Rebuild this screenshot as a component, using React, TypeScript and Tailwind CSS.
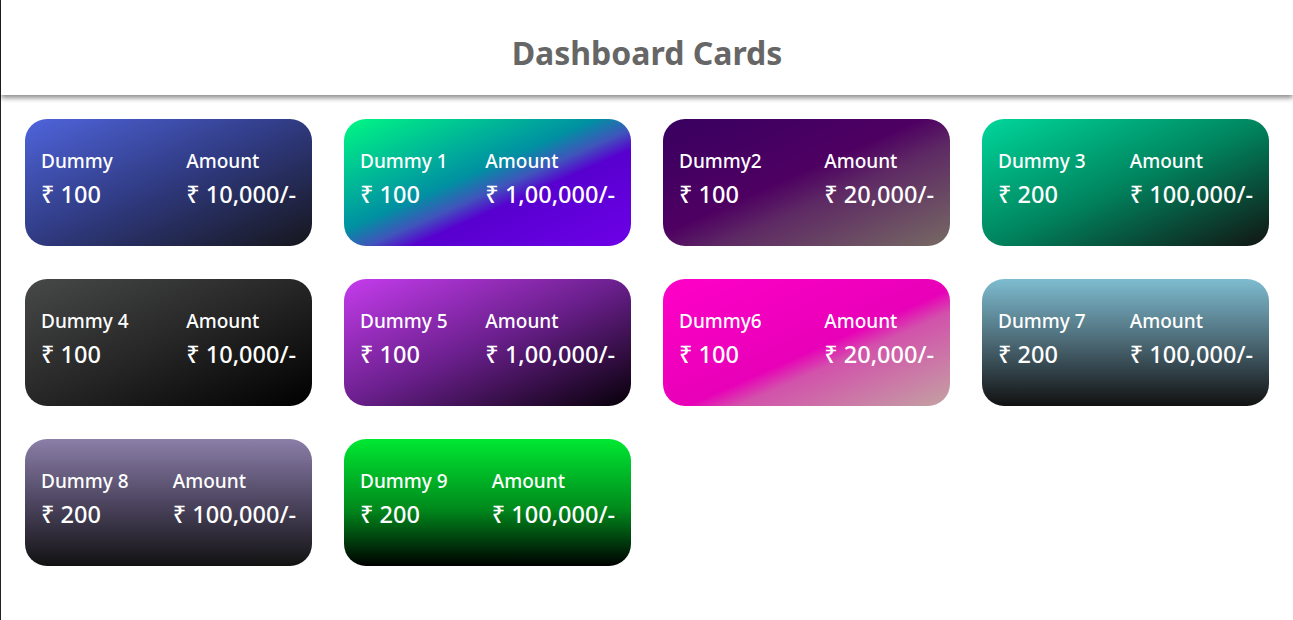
import React from 'react';

type Card = {
  name: string;
  value: string;
  amount: string;
  bg: string;
};

const cards: Card[] = [
  { name: 'Dummy', value: '₹ 100', amount: '₹ 10,000/-', bg: 'bg-[linear-gradient(to_bottom_right,#4f64dc,#2f3a80_50%,#16161c)]' },
  { name: 'Dummy 1', value: '₹ 100', amount: '₹ 1,00,000/-', bg: 'bg-[linear-gradient(to_bottom_right,#00f884,#0090a2_44%,#3f55bb_54%,#5700cf_62%,#6e00e8)]' },
  { name: 'Dummy2', value: '₹ 100', amount: '₹ 20,000/-', bg: 'bg-[linear-gradient(to_bottom_right,#380060,#4e0062_45%,#5e2a64_60%,#766a63)]' },
  { name: 'Dummy 3', value: '₹ 200', amount: '₹ 100,000/-', bg: 'bg-[linear-gradient(to_bottom_right,#00d79b,#00855f_50%,#121412)]' },
  { name: 'Dummy 4', value: '₹ 100', amount: '₹ 10,000/-', bg: 'bg-[linear-gradient(to_bottom_right,#474848,#262626_50%,#000000)]' },
  { name: 'Dummy 5', value: '₹ 100', amount: '₹ 1,00,000/-', bg: 'bg-[linear-gradient(to_bottom_right,#c53ced,#6a1f8c_50%,#060008)]' },
  { name: 'Dummy6', value: '₹ 100', amount: '₹ 20,000/-', bg: 'bg-[linear-gradient(to_bottom_right,#ff00c8,#e800b8_54%,#d252ab_63%,#c3a2a2)]' },
  { name: 'Dummy 7', value: '₹ 200', amount: '₹ 100,000/-', bg: 'bg-[linear-gradient(to_bottom,#7ebcd0,#4b6874_50%,#111111)]' },
  { name: 'Dummy 8', value: '₹ 200', amount: '₹ 100,000/-', bg: 'bg-[linear-gradient(to_bottom,#8b7ea8,#4d4560_50%,#121212)]' },
  { name: 'Dummy 9', value: '₹ 200', amount: '₹ 100,000/-', bg: 'bg-[linear-gradient(to_bottom,#00e832,#008a1c_55%,#000000)]' },
];

const DashCard: React.FC<{ card: Card }> = ({ card }) => (
  <div className={`${card.bg} h-[127px] rounded-[22px] px-4 pt-[29px] flex justify-between text-white`}>
    <div>
      <p className="text-[19px] leading-[26px] font-medium">{card.name}</p>
      <p className="mt-[5px] text-[23.5px] leading-[30px] font-medium">{card.value}</p>
    </div>
    <div>
      <p className="text-[19px] leading-[26px] font-medium">Amount</p>
      <p className="mt-[5px] text-[23.5px] leading-[30px] font-medium">{card.amount}</p>
    </div>
  </div>
);

const App: React.FC = () => {
  return (
    <div className="min-h-screen bg-white border-l border-[#222] font-['Noto_Sans',sans-serif]">
      <header className="relative z-10 h-[95px] bg-white shadow-[0_3px_5px_rgba(0,0,0,0.45)]">
        <h1 className="pt-[34px] text-center text-[32px] leading-[38px] font-bold text-[#666]">Dashboard Cards</h1>
      </header>

      <div className="grid grid-cols-4 gap-x-8 gap-y-[33px] px-6 pt-6 pb-10">
        {cards.map((card) => (
          <DashCard key={card.name} card={card} />
        ))}
      </div>
    </div>
  );
};

export default App;
